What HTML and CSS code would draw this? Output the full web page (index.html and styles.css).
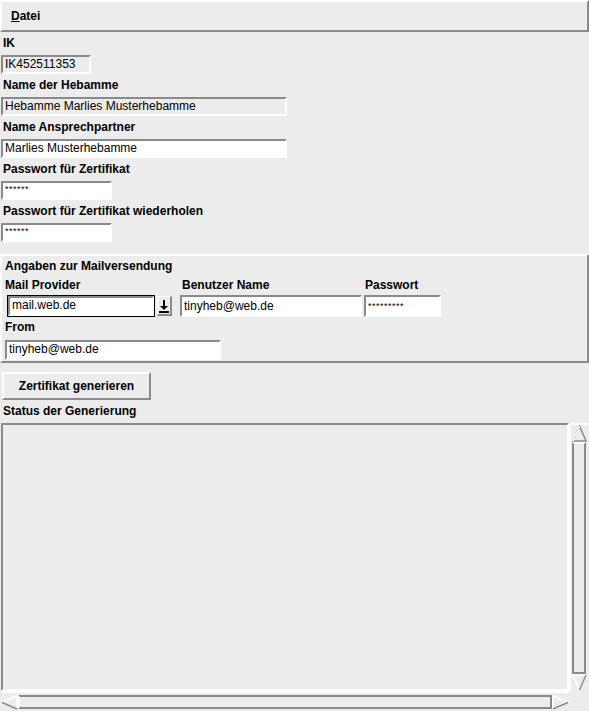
FILE: index.html
```html
<!DOCTYPE html>
<html>
<head>
<meta charset="utf-8">
<link rel="stylesheet" href="styles.css">
</head>
<body>
<div class="menubar"><span class="menu"><u>D</u>atei</span></div>
<div class="form">
  <div class="label">IK</div>
  <div class="entry ro w90">IK452511353</div>
  <div class="label">Name der Hebamme</div>
  <div class="entry ro w286">Hebamme Marlies Musterhebamme</div>
  <div class="label">Name Ansprechpartner</div>
  <div class="entry w286">Marlies Musterhebamme</div>
  <div class="label">Passwort für Zertifikat</div>
  <div class="entry w111 pw">******</div>
  <div class="label">Passwort für Zertifikat wiederholen</div>
  <div class="entry w111 pw">******</div>
</div>
<div class="frame">
  <div class="label ftitle">Angaben zur Mailversendung</div>
  <div class="mailrow">
    <div class="col c1">
      <div class="label">Mail Provider</div>
      <div class="combo">
        <div class="focus"><div class="entry w146">mail.web.de</div></div>
        <div class="dropbtn"><svg width="12" height="14" viewBox="0 0 12 14"><path d="M5 1h2v6h3l-4 4-4-4h3z" fill="#000"/><rect x="1" y="12" width="10" height="2" fill="#000"/></svg></div>
      </div>
    </div>
    <div class="col c2">
      <div class="label">Benutzer Name</div>
      <div class="entry w182 tall">tinyheb@web.de</div>
    </div>
    <div class="col c3">
      <div class="label">Passwort</div>
      <div class="entry w77 tall pw">*********</div>
    </div>
  </div>
  <div class="label">From</div>
  <div class="entry w216 from">tinyheb@web.de</div>
</div>
<div class="actions">
  <button class="btn">Zertifikat generieren</button>
  <div class="label">Status der Generierung</div>
</div>
<div class="textwrap">
  <div class="textrow">
    <div class="textarea"></div>
    <div class="vscroll">
      <svg class="arr" width="17" height="17" viewBox="0 0 17 17"><path d="M8.5 1L2 16h13z" fill="#ececec" stroke="#8a8a8a" stroke-width="1.5"/><path d="M8.5 1L2 16" stroke="#fff" stroke-width="1.5"/></svg>
      <div class="vslider"></div>
      <svg class="arr" width="17" height="17" viewBox="0 0 17 17"><path d="M8.5 16L2 1h13z" fill="#ececec" stroke="#fff" stroke-width="1.5"/><path d="M8.5 16L15 1" stroke="#8a8a8a" stroke-width="1.5"/></svg>
    </div>
  </div>
  <div class="hrow">
    <div class="hscroll">
      <svg class="arr" width="17" height="17" viewBox="0 0 17 17"><path d="M1 8.5L16 2v13z" fill="#ececec" stroke="#fff" stroke-width="1.5"/><path d="M1 8.5L16 15" stroke="#8a8a8a" stroke-width="1.5"/></svg>
      <div class="hslider"></div>
      <svg class="arr" width="17" height="17" viewBox="0 0 17 17"><path d="M16 8.5L1 2v13z" fill="#ececec" stroke="#fff" stroke-width="1.5"/><path d="M16 8.5L1 15" stroke="#8a8a8a" stroke-width="1.5"/></svg>
    </div>
    <div class="corner"></div>
  </div>
</div>
</body>
</html>
```
FILE: styles.css
```css
html, body {
  margin: 0;
  padding: 0;
  background: #ececec;
  font-family: "Liberation Sans", Arial, sans-serif;
  font-size: 12px;
  color: #000;
}
body {
  width: 589px;
  height: 711px;
  overflow: hidden;
}
.menubar {
  height: 28px;
  border-top: 2px solid #fff;
  border-left: 2px solid #fff;
  border-bottom: 2px solid #8a8a8a;
  border-right: 2px solid #8a8a8a;
  display: flex;
  align-items: center;
  padding-left: 9px;
}
.menu {
  font-weight: bold;
}
.form {
  padding: 2px 0 0 1px;
}
.label {
  font-weight: bold;
  height: 19px;
  line-height: 19px;
  padding-left: 2px;
}
.entry {
  box-sizing: border-box;
  height: 19px;
  line-height: 15px;
  border-top: 2px solid #8a8a8a;
  border-left: 2px solid #8a8a8a;
  border-bottom: 2px solid #fff;
  border-right: 2px solid #fff;
  background: #fff;
  padding-left: 2px;
  margin-top: 2px;
  margin-bottom: 2px;
  white-space: nowrap;
  overflow: hidden;
}
.entry.ro { background: #ececec; }
.entry.pw { font-size: 9px; line-height: 13px; letter-spacing: 0.5px; }
.w90 { width: 90px; }
.w286 { width: 286px; }
.w111 { width: 111px; }
.w146 { width: 146px; }
.w182 { width: 182px; }
.w77 { width: 77px; }
.w216 { width: 216px; margin-left: 2px; }
.frame {
  margin-top: 12px;
  height: 104px;
  border-top: 2px solid #fff;
  border-left: 2px solid #fff;
  border-bottom: 2px solid #8a8a8a;
  border-right: 2px solid #8a8a8a;
  padding: 1px 0 0 1px;
}
.ftitle { margin-bottom: 0; }
.mailrow {
  display: flex;
}
.col .label { margin-bottom: 0; }
.c1 { width: 177px; }
.c2 { width: 183px; }
.combo {
  display: flex;
  align-items: center;
  padding-left: 4px;
}
.focus {
  border: 1px solid #000;
  height: 22px;
  box-sizing: border-box;
}
.focus .entry { height: 20px; margin: 0; }
.dropbtn {
  width: 15px;
  height: 20px;
  margin-left: 2px;
  box-sizing: border-box;
  border-top: 1px solid #fff;
  border-left: 1px solid #fff;
  border-bottom: 2px solid #8a8a8a;
  border-right: 2px solid #8a8a8a;
  display: flex;
  align-items: center;
  justify-content: center;
}
.entry.tall { height: 22px; line-height: 18px; margin: 0; }
.c3 .entry { margin-left: 1px; }
.mailrow { margin-bottom: 1px; }
.from { height: 20px; margin-top: 3px; margin-bottom: 0; }
.actions {
  padding: 9px 0 0 2px;
}
.btn {
  font-family: inherit;
  font-size: 12px;
  font-weight: bold;
  width: 149px;
  height: 28px;
  background: #ececec;
  border-top: 2px solid #fff;
  border-left: 2px solid #fff;
  border-bottom: 2px solid #8a8a8a;
  border-right: 2px solid #8a8a8a;
  padding: 0;
  display: block;
  margin-bottom: 2px;
  color: #000;
}
.actions .label { padding-left: 1px; }
.textwrap {
  margin-top: 2px;
  padding-left: 1px;
}
.textrow {
  display: flex;
  height: 268px;
}
.textarea {
  flex: 1;
  box-sizing: border-box;
  border-top: 2px solid #8a8a8a;
  border-left: 2px solid #8a8a8a;
  border-bottom: 2px solid #fff;
  border-right: 2px solid #fff;
  background: #ececec;
}
.vscroll {
  width: 20px;
  box-sizing: border-box;
  border-left: 2px solid #fff;
  border-top: 2px solid #fff;
  border-right: 2px solid #ececec;
  display: flex;
  flex-direction: column;
  align-items: center;
}
.vslider {
  flex: 1;
  width: 14px;
  box-sizing: border-box;
  border-top: 2px solid #fff;
  border-left: 2px solid #8a8a8a;
  border-right: 2px solid #8a8a8a;
  border-bottom: 2px solid #8a8a8a;
}
.arr { display: block; flex: none; }
.hrow {
  display: flex;
  height: 20px;
}
.hscroll {
  flex: 1;
  box-sizing: border-box;
  border-top: 2px solid #fff;
  display: flex;
  align-items: center;
}
.hslider {
  flex: 1;
  height: 14px;
  box-sizing: border-box;
  border-top: 2px solid #8a8a8a;
  border-left: 2px solid #fff;
  border-bottom: 2px solid #8a8a8a;
  border-right: 2px solid #8a8a8a;
}
.corner { width: 20px; }
```
